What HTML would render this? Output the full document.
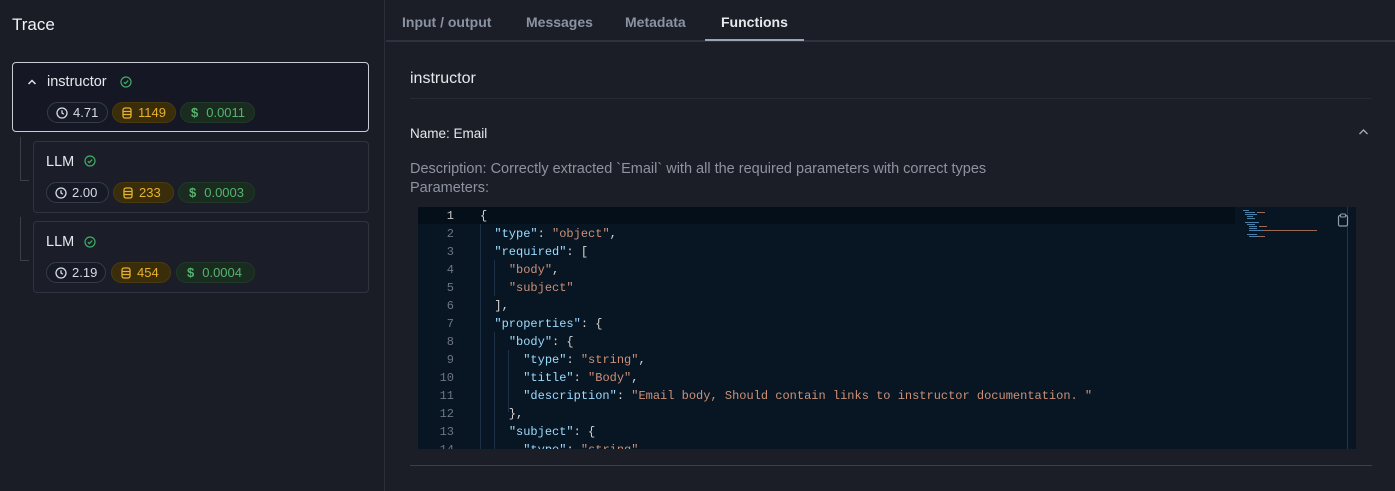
<!DOCTYPE html>
<html><head><meta charset="utf-8"><style>
*{margin:0;padding:0;box-sizing:border-box}
body{width:1395px;height:491px;background:#1b1e27;font-family:"Liberation Sans",sans-serif;position:relative;overflow:hidden;color:#e6e8ec}
.a{position:absolute;white-space:pre}
.left{position:absolute;left:0;top:0;width:385px;height:491px;background:#1a1d26;border-right:1px solid #2a2e39}
.card{position:absolute;border:1px solid #2f3441;border-radius:4px;background:#1b1e28}
.badge{position:absolute;height:21px;border-radius:11px;font-size:13px;line-height:19px;padding-left:8px;display:flex;align-items:center;gap:5px}
.b1{border:1px solid #363b4a;background:#151a26;color:#d8dbe2}
.b2{border:1px solid #4a3a10;background:#3a2e0a;color:#e8b22c}
.b3{border:1px solid #1f3a26;background:#1a2c20;color:#56b36f}
.tab{position:absolute;top:13px;font-size:14px;font-weight:bold;color:#8b93a3}
.code{position:absolute;left:418px;top:207px;width:938px;height:242px;background:#081522;overflow:hidden;font-family:"Liberation Mono",monospace;font-size:12px}
.ln{position:absolute;left:0;width:36px;text-align:right;color:#6e7681}
.cl{position:absolute;left:62px;color:#d4d4d4;white-space:pre}
.k{color:#9cdcfe}.s{color:#ce9178}
.tx{position:absolute;left:0;top:1px;width:938px;height:242px}
</style></head><body>
<div class="left">
<div class="a" style="left:12px;top:15px;font-size:17px;color:#f0f2f5">Trace</div>
<div style="position:absolute;left:20px;top:137px;width:9px;height:44px;border-left:1px solid #3a3f4c;border-bottom:1px solid #3a3f4c"></div>
<div style="position:absolute;left:20px;top:217px;width:9px;height:44px;border-left:1px solid #3a3f4c;border-bottom:1px solid #3a3f4c"></div>
<div class="card" style="left:12px;top:62px;width:357px;height:70px;border-color:#c8ccd4;background:#151824"></div>
<svg class="a" style="left:27px;top:78px" width="10" height="8" viewBox="0 0 10 8"><path d="M1.5 6L5 2.5 8.5 6" fill="none" stroke="#e0e3e8" stroke-width="1.5"/></svg>
<div class="a" style="left:47px;top:74px;font-size:14.5px">instructor</div>
<svg class="a" style="left:120px;top:76px" width="12" height="12" viewBox="0 0 12 12"><circle cx="6" cy="6" r="5" fill="none" stroke="#3fae62" stroke-width="1.2"/><path d="M3.8 6.2l1.5 1.4 2.9-3" fill="none" stroke="#3fae62" stroke-width="1.2"/></svg>
<div class="card" style="left:33px;top:141px;width:336px;height:72px"></div>
<div class="a" style="left:46px;top:154px;font-size:14.5px">LLM</div>
<svg class="a" style="left:84px;top:155px" width="12" height="12" viewBox="0 0 12 12"><circle cx="6" cy="6" r="5" fill="none" stroke="#3fae62" stroke-width="1.2"/><path d="M3.8 6.2l1.5 1.4 2.9-3" fill="none" stroke="#3fae62" stroke-width="1.2"/></svg>
<div class="card" style="left:33px;top:221px;width:336px;height:72px"></div>
<div class="a" style="left:46px;top:234px;font-size:14.5px">LLM</div>
<svg class="a" style="left:84px;top:236px" width="12" height="12" viewBox="0 0 12 12"><circle cx="6" cy="6" r="5" fill="none" stroke="#3fae62" stroke-width="1.2"/><path d="M3.8 6.2l1.5 1.4 2.9-3" fill="none" stroke="#3fae62" stroke-width="1.2"/></svg>

<div class="badge b1" style="left:47px;top:102px;width:61px"><svg width="12" height="12" viewBox="0 0 12 12"><circle cx="6" cy="6" r="5" fill="none" stroke="#d8dbe2" stroke-width="1.3"/><path d="M6 3.2V6l1.8 1.2" fill="none" stroke="#d8dbe2" stroke-width="1.3"/></svg>4.71</div>
<div class="badge b2" style="left:112px;top:102px;width:64px"><svg width="12" height="12" viewBox="0 0 12 12"><rect x="2" y="1" width="8" height="10" rx="2" fill="none" stroke="#e8b22c" stroke-width="1.3"/><path d="M2 4.5h8M2 7.5h8" stroke="#e8b22c" stroke-width="1.2"/></svg>1149</div>
<div class="badge b3" style="left:180px;top:102px;width:75px;gap:8px;padding-left:10px"><span style="font-weight:bold">$</span>0.0011</div>

<div class="badge b1" style="left:46px;top:182px;width:63px"><svg width="12" height="12" viewBox="0 0 12 12"><circle cx="6" cy="6" r="5" fill="none" stroke="#d8dbe2" stroke-width="1.3"/><path d="M6 3.2V6l1.8 1.2" fill="none" stroke="#d8dbe2" stroke-width="1.3"/></svg>2.00</div>
<div class="badge b2" style="left:113px;top:182px;width:61px"><svg width="12" height="12" viewBox="0 0 12 12"><rect x="2" y="1" width="8" height="10" rx="2" fill="none" stroke="#e8b22c" stroke-width="1.3"/><path d="M2 4.5h8M2 7.5h8" stroke="#e8b22c" stroke-width="1.2"/></svg>233</div>
<div class="badge b3" style="left:178px;top:182px;width:77px;gap:8px;padding-left:10px"><span style="font-weight:bold">$</span>0.0003</div>

<div class="badge b1" style="left:46px;top:262px;width:60px"><svg width="12" height="12" viewBox="0 0 12 12"><circle cx="6" cy="6" r="5" fill="none" stroke="#d8dbe2" stroke-width="1.3"/><path d="M6 3.2V6l1.8 1.2" fill="none" stroke="#d8dbe2" stroke-width="1.3"/></svg>2.19</div>
<div class="badge b2" style="left:111px;top:262px;width:60px"><svg width="12" height="12" viewBox="0 0 12 12"><rect x="2" y="1" width="8" height="10" rx="2" fill="none" stroke="#e8b22c" stroke-width="1.3"/><path d="M2 4.5h8M2 7.5h8" stroke="#e8b22c" stroke-width="1.2"/></svg>454</div>
<div class="badge b3" style="left:176px;top:262px;width:79px;gap:8px;padding-left:10px"><span style="font-weight:bold">$</span>0.0004</div>
</div>

<div style="position:absolute;left:386px;top:40px;width:1009px;height:2px;background:#2c323e"></div>
<div class="tab" style="left:402px;top:14px">Input / output</div>
<div class="tab" style="left:526px;top:14px">Messages</div>
<div class="tab" style="left:625px;top:14px">Metadata</div>
<div class="tab" style="left:721px;top:14px;color:#e6e9ee">Functions</div>
<div style="position:absolute;left:705px;top:39px;width:99px;height:2px;background:#9aa6b8"></div>

<div class="a" style="left:410px;top:70px;font-size:16px">instructor</div>
<div style="position:absolute;left:410px;top:98px;width:962px;height:1px;background:#262a35"></div>
<div class="a" style="left:410px;top:126px;font-size:13.5px">Name: Email</div>
<svg class="a" style="left:1358px;top:128px" width="11" height="8" viewBox="0 0 11 8"><path d="M1.5 6L5.5 2 9.5 6" fill="none" stroke="#a0a8b6" stroke-width="1.4"/></svg>
<div class="a" style="left:410px;top:161px;font-size:14.5px;color:#8d94a0">Description: Correctly extracted `Email` with all the required parameters with correct types</div>
<div class="a" style="left:410px;top:180px;font-size:14.5px;color:#8d94a0">Parameters:</div>

<div class="code">
<div style="position:absolute;left:0;top:0;width:817px;height:17px;background:#050f19"></div>
<div style="position:absolute;left:62px;top:17px;height:225px;border-left:1px solid #1e3048"></div>
<div style="position:absolute;left:76px;top:53px;height:36px;border-left:1px solid #1e3048"></div>
<div style="position:absolute;left:76px;top:125px;height:125px;border-left:1px solid #1e3048"></div>
<div style="position:absolute;left:90px;top:143px;height:62px;border-left:1px solid #1e3048"></div>
<div style="position:absolute;left:929px;top:0;height:242px;border-left:1px solid #2a3444"></div>
<svg style="position:absolute;left:823px;top:2px" width="90" height="35"><g fill="#4a7fa8"><rect x="2" y="1" width="6" height="1"/><rect x="4" y="3" width="10" height="1"/><rect x="4" y="5" width="12" height="1"/><rect x="6" y="7" width="6" height="1"/><rect x="6" y="9" width="8" height="1"/><rect x="4" y="13" width="14" height="1"/><rect x="6" y="15" width="8" height="1"/><rect x="8" y="17" width="8" height="1"/><rect x="8" y="19" width="8" height="1"/><rect x="8" y="21" width="14" height="1"/><rect x="6" y="25" width="10" height="1"/><rect x="8" y="27" width="8" height="1"/></g><g fill="#9a6a55"><rect x="16" y="3" width="8" height="1"/><rect x="22" y="21" width="54" height="1"/><rect x="18" y="17" width="8" height="1"/><rect x="16" y="27" width="8" height="1"/></g></svg>
<svg style="position:absolute;left:919px;top:6px" width="12" height="14" viewBox="0 0 12 14"><rect x="1.5" y="2.5" width="9" height="10.5" rx="1.5" fill="none" stroke="#8f9aab" stroke-width="1.2"/><rect x="3.5" y="1" width="5" height="3" rx="1" fill="#081522" stroke="#8f9aab" stroke-width="1.1"/></svg>
<div class="tx">
<div class="ln" style="top:1px;color:#c6c6c6">1</div><div class="cl" style="top:1px">{</div>
<div class="ln" style="top:19px">2</div><div class="cl" style="top:19px">  <span class="k">"type"</span>: <span class="s">"object"</span>,</div>
<div class="ln" style="top:37px">3</div><div class="cl" style="top:37px">  <span class="k">"required"</span>: [</div>
<div class="ln" style="top:55px">4</div><div class="cl" style="top:55px">    <span class="s">"body"</span>,</div>
<div class="ln" style="top:73px">5</div><div class="cl" style="top:73px">    <span class="s">"subject"</span></div>
<div class="ln" style="top:91px">6</div><div class="cl" style="top:91px">  ],</div>
<div class="ln" style="top:109px">7</div><div class="cl" style="top:109px">  <span class="k">"properties"</span>: {</div>
<div class="ln" style="top:127px">8</div><div class="cl" style="top:127px">    <span class="k">"body"</span>: {</div>
<div class="ln" style="top:145px">9</div><div class="cl" style="top:145px">      <span class="k">"type"</span>: <span class="s">"string"</span>,</div>
<div class="ln" style="top:163px">10</div><div class="cl" style="top:163px">      <span class="k">"title"</span>: <span class="s">"Body"</span>,</div>
<div class="ln" style="top:181px">11</div><div class="cl" style="top:181px">      <span class="k">"description"</span>: <span class="s">"Email body, Should contain links to instructor documentation. "</span></div>
<div class="ln" style="top:199px">12</div><div class="cl" style="top:199px">    },</div>
<div class="ln" style="top:217px">13</div><div class="cl" style="top:217px">    <span class="k">"subject"</span>: {</div>
<div class="ln" style="top:235px">14</div><div class="cl" style="top:235px">      <span class="k">"type"</span>: <span class="s">"string"</span>,</div>
</div>
</div>
<div style="position:absolute;left:410px;top:465px;width:962px;height:1px;background:#3a3f4b"></div>
</body></html>
